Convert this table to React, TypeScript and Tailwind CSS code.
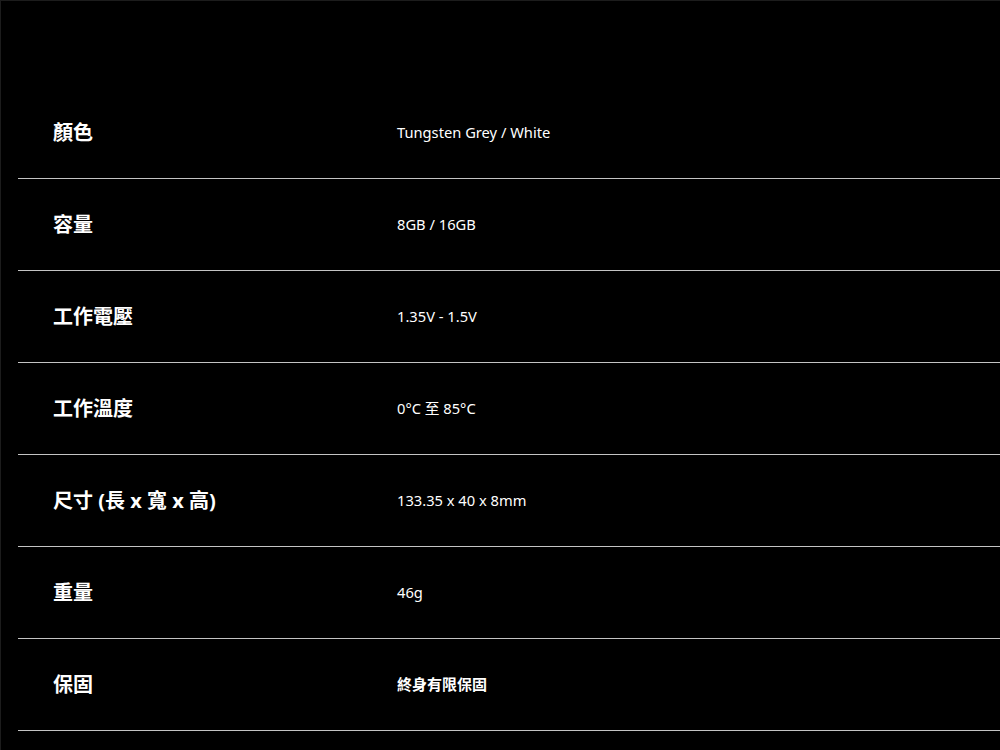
const specs = [
  { label: '顏色', value: 'Tungsten Grey / White' },
  { label: '容量', value: '8GB / 16GB' },
  { label: '工作電壓', value: '1.35V - 1.5V' },
  { label: '工作溫度', value: '0°C 至 85°C' },
  { label: '尺寸 (長 x 寬 x 高)', value: '133.35 x 40 x 8mm' },
  { label: '重量', value: '46g' },
  { label: '保固', value: '終身有限保固' },
];

export default function App() {
  return (
    <div
      className="w-[1000px] h-[750px] overflow-hidden bg-black border-l border-t border-[#1c1c1c] pt-[86px] pl-[17px] text-white"
      style={{ fontFamily: '"Noto Sans", "Noto Sans CJK TC", sans-serif' }}
    >
      {specs.map((row, i) => (
        <div
          key={row.label}
          className="flex items-center h-[92px] border-b border-[#c4c4c4]"
        >
          <div className="w-[379px] pl-[35px] text-[20px] font-bold leading-none">
            {row.label}
          </div>
          <div
            className={
              i === specs.length - 1
                ? 'text-[15px] leading-none font-semibold'
                : 'text-[14.7px] leading-none'
            }
          >
            {row.value}
          </div>
        </div>
      ))}
    </div>
  );
}
